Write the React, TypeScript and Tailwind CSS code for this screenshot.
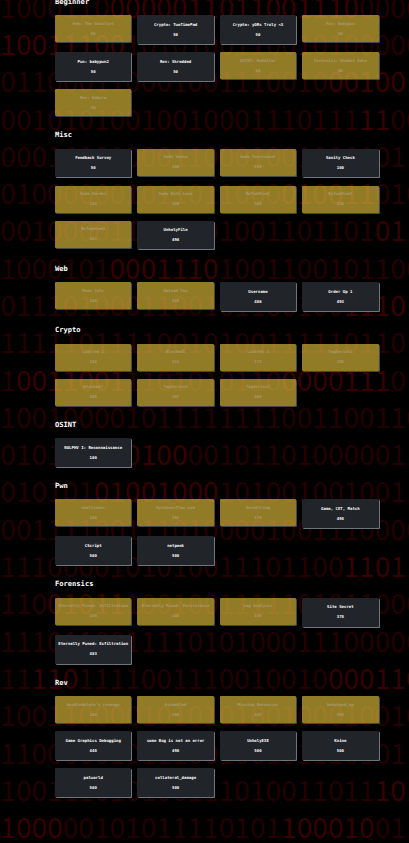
type Challenge = [name: string, points: number, solved?: boolean];

const sections: { title: string; items: Challenge[] }[] = [
  {
    title: "Beginner",
    items: [
      ["Web: The Gauntlet", 50, true],
      ["Crypto: TwoTimePad", 50],
      ["Crypto: yORs Truly <3", 50],
      ["Pwn: babypwn", 50, true],
      ["Pwn: babypwn2", 50],
      ["Rev: Shredded", 50],
      ["OSINT: Redditor", 50, true],
      ["Forensics: Hidden Data", 50, true],
      ["Rev: babyre", 50, true],
    ],
  },
  {
    title: "Misc",
    items: [
      ["Feedback Survey", 50],
      ["Sudo Sense", 100, true],
      ["Sudo Functional", 100, true],
      ["Sanity Check", 100],
      ["Sudo Harder", 204, true],
      ["Sudo With Love", 300, true],
      ["Refuddled1", 300, true],
      ["Refuddled2", 356, true],
      ["Refuddled3", 363, true],
      ["UnholyFile", 498],
    ],
  },
  {
    title: "Web",
    items: [
      ["Moon Calc", 100, true],
      ["Upload Fun", 428, true],
      ["Username", 486],
      ["Order Up 1", 493],
    ],
  },
  {
    title: "Crypto",
    items: [
      ["Limited 1", 100, true],
      ["Blocked1", 111, true],
      ["Limited 2", 172, true],
      ["TagSeries1", 288, true],
      ["Blocked2", 308, true],
      ["TagSeries3", 387, true],
      ["TagSeries2", 469, true],
    ],
  },
  { title: "OSINT", items: [["NOLPHV I: Reconnaissance", 100]] },
  {
    title: "Pwn",
    items: [
      ["shellcoder", 100, true],
      ["byteOverflow.com", 261, true],
      ["DerpString", 376, true],
      ["Game, CET, Match", 498],
      ["CScript", 500],
      ["netpeek", 500],
    ],
  },
  {
    title: "Forensics",
    items: [
      ["Eternally Pwned: Infiltration", 100, true],
      ["Eternally Pwned: Persistence", 100, true],
      ["Log Analysis", 100, true],
      ["Site Secret", 378],
      ["Eternally Pwned: Exfiltration", 483],
    ],
  },
  {
    title: "Rev",
    items: [
      ["doubledelete's revenge", 100, true],
      ["Assembled", 188, true],
      ["Missing Resources", 343, true],
      ["bebuhged_up", 398, true],
      ["Game Graphics Debugging", 448],
      ["some Bug is not an error", 498],
      ["UnholyEXE", 500],
      ["Knine", 500],
      ["palworld", 500],
      ["collateral_damage", 500],
    ],
  },
];

// Brackets wrap the brighter runs of each row.
const digitRows = [
  "1000110[0000011011001110]00000",
  "[10011100]1010100110010100000",
  "011000110001001110010[001001]",
  "00101010010010001110111[11]00",
  "000101010001100010010101011",
  "010000001011011000[010011]010",
  "001000011000101001101101[011]",
  "1000101[0001110]1001100101100",
  "0111010001100101100100[11101]",
  "111110111100101001111101101",
  "1[0011001]1101010110[0000111]01",
  "100100001011111111001100110",
  "01010011[0100]001011010000011",
  "010101[01001000]1010010010011",
  "001111001110100001001110000",
  "1110000101010011101100[11011]",
  "110[01011]1001001111101011000",
  "111011001111010100011100000",
  "11[110]1111001110010010[000110]",
  "100110000101010100100010010",
  "110000010111001001011101011",
  "100111010100111010011011[101]",
  "[1000]00101011110101[100010]011",
];

function Background() {
  return (
    <div
      aria-hidden="true"
      className="pointer-events-none absolute left-[0.3px] top-[-12.4px] w-[430px] font-['Noto_Sans_CJK_SC',sans-serif] text-[28px] leading-[37.3px] tracking-[0.06px] whitespace-nowrap text-[#250000]"
    >
      {digitRows.map((row, r) => (
        <div key={r} className="h-[37.3px]">
          {row.split(/[[\]]/).map((run, i) => (
            <span key={i} className={i % 2 ? "text-[#3a0000]" : undefined}>
              {run}
            </span>
          ))}
        </div>
      ))}
    </div>
  );
}

function Card({ item: [name, points, solved] }: { item: Challenge }) {
  return (
    <div className={solved ? "h-[35px]" : "h-[37px]"}>
      <div
        className={
          "w-[76.4px] rounded-[1px] text-center text-[4px] font-bold leading-[10px] whitespace-nowrap " +
          (solved
            ? "h-[27px] bg-[#e1bd3c]/65 pt-[3.5px] text-[#a8996f] shadow-[1px_1px_0_#42484c]"
            : "h-[28.7px] bg-[#212429] pt-[4.5px] text-white shadow-[1px_1px_0_#6c757d]")
        }
      >
        <p>{name}</p>
        <p>{points}</p>
      </div>
    </div>
  );
}

export default function App() {
  return (
    <main className="relative h-[843px] w-[409px] overflow-hidden bg-black font-['DejaVu_Sans_Mono',monospace]">
      <Background />
      <div className="relative -mt-[9.1875px] ml-[55px]">
        {sections.map((section) => (
          <section key={section.title}>
            <h3 className="h-[24.4375px] pt-[6px] text-[7.1px] font-bold leading-[10px] text-white">
              {section.title}
            </h3>
            <div className="grid grid-cols-[repeat(4,82.4px)] items-start">
              {section.items.map((item) => (
                <Card key={item[0]} item={item} />
              ))}
            </div>
          </section>
        ))}
      </div>
    </main>
  );
}
